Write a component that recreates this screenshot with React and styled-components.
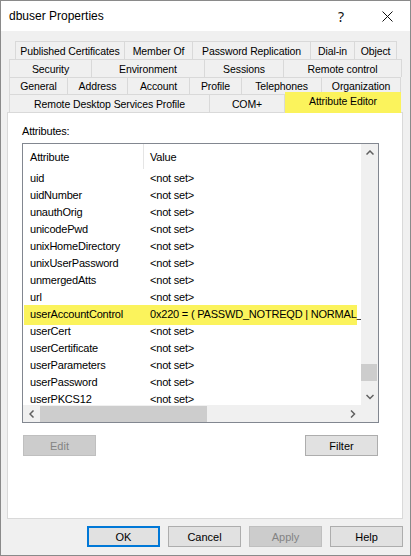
import React from 'react';
import styled, { createGlobalStyle } from 'styled-components';

const Global = createGlobalStyle`
  html, body { margin: 0; padding: 0; background: #ffffff; }
  body { font-family: "Liberation Sans", Arial, sans-serif; }
  * { box-sizing: border-box; }
`;

const Window = styled.div`
  width: 411px;
  height: 556px;
  border: 1px solid #8a8a8a;
  background: #f0f0f0;
  display: flex;
  flex-direction: column;
  font-family: "Liberation Sans", Arial, sans-serif;
  font-size: 11px;
  letter-spacing: -0.2px;
  color: #000;
  overflow: hidden;
`;

const TitleBar = styled.div`
  height: 30px;
  flex-shrink: 0;
  background: #ffffff;
  display: flex;
  align-items: center;
  padding-left: 8px;
`;

const Title = styled.div`
  flex: 1;
  font-family: "Liberation Sans", Arial, sans-serif;
  font-size: 12px;
  letter-spacing: 0;
`;

const TitleButton = styled.div`
  width: 46px;
  height: 30px;
  display: flex;
  align-items: center;
  justify-content: center;
  font-family: "Noto Sans", sans-serif;
  font-size: 14px;
  letter-spacing: 0;
  color: #111;
`;

const Body = styled.div`
  flex: 1;
  display: flex;
  flex-direction: column;
  padding: 10px 7px 0 6px;
`;

const TabRow = styled.div`
  display: flex;
  height: ${p => p.$h}px;
  padding-left: ${p => p.$indent}px;
  font-size: 10.5px;
  letter-spacing: -0.1px;
`;

const Tab = styled.div`
  width: ${p => p.$w}px;
  flex-shrink: 0;
  display: flex;
  align-items: center;
  justify-content: center;
  white-space: nowrap;
  border-top: 1px solid #d9d9d9;
  border-right: 1px solid #d9d9d9;
  &:first-child { border-left: 1px solid #d9d9d9; }
  background: #f0f0f0;
`;

const SelectedTab = styled.div`
  width: ${p => p.$w}px;
  flex-shrink: 0;
  display: flex;
  align-items: center;
  justify-content: center;
  white-space: nowrap;
  background: #fbf35c;
  margin-top: -2px;
  margin-bottom: -1px;
  padding-bottom: 3px;
  position: relative;
  z-index: 1;
`;

const Panel = styled.div`
  height: 407px;
  background: #ffffff;
  border: 1px solid #d9d9d9;
  padding: 12px 0 0 14px;
  display: flex;
  flex-direction: column;
`;

const Label = styled.div`
  height: 13px;
  line-height: 13px;
`;

const ListBox = styled.div`
  margin-top: 5px;
  width: 357px;
  height: 280px;
  border: 1px solid #828790;
  display: grid;
  grid-template-columns: 338px 17px;
  grid-template-rows: 261px 17px;
`;

const ListContent = styled.div`
  overflow: hidden;
  display: flex;
  flex-direction: column;
`;

const HeaderRow = styled.div`
  height: 25px;
  flex-shrink: 0;
  display: flex;
  align-items: stretch;
`;

const HeaderCell = styled.div`
  width: ${p => (p.$w ? `${p.$w}px` : 'auto')};
  flex: ${p => (p.$w ? '0 0 auto' : '1')};
  display: flex;
  align-items: center;
  padding-left: ${p => p.$pad}px;
  border-right: ${p => (p.$divider ? '1px solid #e5e5e5' : 'none')};
`;

const Row = styled.div`
  height: 17px;
  flex-shrink: 0;
  display: flex;
  align-items: center;
  white-space: nowrap;
  position: relative;
  ${p =>
    p.$hl &&
    `
    &::before {
      content: "";
      position: absolute;
      left: 1px;
      right: 4px;
      top: 0;
      bottom: -3px;
      background: #fbf35c;
    }
  `}
`;

const Cell = styled.div`
  position: relative;
  width: ${p => (p.$w ? `${p.$w}px` : 'auto')};
  flex: ${p => (p.$w ? '0 0 auto' : '1 1 auto')};
  min-width: 0;
  overflow: hidden;
  padding-left: ${p => p.$pad}px;
  padding-top: 1px;
`;

const VScroll = styled.div`
  background: #f0f0f0;
  display: flex;
  flex-direction: column;
`;

const ArrowBox = styled.div`
  width: 17px;
  height: 17px;
  flex-shrink: 0;
  display: flex;
  align-items: center;
  justify-content: center;
`;

const VTrack = styled.div`
  flex: 1;
  display: flex;
  flex-direction: column;
  justify-content: flex-end;
`;

const VThumb = styled.div`
  height: 17px;
  margin: 0 1px 7px 0;
  background: #cdcdcd;
`;

const HScroll = styled.div`
  background: #f0f0f0;
  display: flex;
  align-items: stretch;
`;

const HTrack = styled.div`
  flex: 1;
  display: flex;
  align-items: stretch;
`;

const HThumb = styled.div`
  width: 167px;
  margin: 1px 0 0 0;
  background: #cdcdcd;
`;

const Corner = styled.div`
  background: #f0f0f0;
`;

const ButtonRow = styled.div`
  width: 357px;
  margin-top: 12px;
  display: flex;
  justify-content: space-between;
  padding: 0 1px;
`;

const Button = styled.div`
  width: 73px;
  height: 21px;
  display: flex;
  align-items: center;
  justify-content: center;
  font-family: "Liberation Sans", Arial, sans-serif;
  font-size: 11px;
  letter-spacing: 0;
  border: ${p => (p.$default ? '2px solid #0078d7' : p.$disabled ? '1px solid #bfbfbf' : '1px solid #adadad')};
  background: ${p => (p.$disabled ? '#cccccc' : '#e1e1e1')};
  color: ${p => (p.$disabled ? '#838383' : '#000')};
`;

const Footer = styled.div`
  display: flex;
  justify-content: flex-end;
  gap: 8px;
  margin-top: 7px;
`;

const Chevron = ({ dir }) => {
  const pts = {
    up: '0.5,4.5 4,1 7.5,4.5',
    down: '0.5,1 4,4.5 7.5,1',
    left: '4.5,0.5 1,4 4.5,7.5',
    right: '1,0.5 4.5,4 1,7.5',
  }[dir];
  const vertical = dir === 'up' || dir === 'down';
  return (
    <svg width={vertical ? 8 : 6} height={vertical ? 6 : 8} viewBox={vertical ? '0 0 8 6' : '0 0 6 8'}>
      <polyline points={pts} fill="none" stroke="#606060" strokeWidth="1.5" />
    </svg>
  );
};

const tabRows = [
  { h: 18, indent: 8, tabs: [['Published Certificates', 110], ['Member Of', 68], ['Password Replication', 118], ['Dial-in', 44], ['Object', 42]] },
  { h: 18, indent: 2, tabs: [['Security', 83], ['Environment', 113], ['Sessions', 79], ['Remote control', 118]] },
  { h: 17, indent: 2, tabs: [['General', 59], ['Address', 60], ['Account', 62], ['Profile', 52], ['Telephones', 80], ['Organization', 79]] },
  { h: 18, indent: 2, tabs: [['Remote Desktop Services Profile', 201], ['COM+', 75], ['Attribute Editor', 116, true]] },
];

const NS = '<not set>';
const attrs = [
  ['uid', NS],
  ['uidNumber', NS],
  ['unauthOrig', NS],
  ['unicodePwd', NS],
  ['unixHomeDirectory', NS],
  ['unixUserPassword', NS],
  ['unmergedAtts', NS],
  ['url', NS],
  ['userAccountControl', '0x220 = ( PASSWD_NOTREQD | NORMAL_ACCOUNT )', true],
  ['userCert', NS],
  ['userCertificate', NS],
  ['userParameters', NS],
  ['userPassword', NS],
  ['userPKCS12', NS],
];

export default function App() {
  return (
    <>
      <Global />
      <Window>
        <TitleBar>
          <Title>dbuser Properties</Title>
          <TitleButton>?</TitleButton>
          <TitleButton>
            <svg width="11" height="11" viewBox="0 0 11 11">
              <path d="M0.5 0.5 L10.5 10.5 M10.5 0.5 L0.5 10.5" stroke="#111" strokeWidth="1" fill="none" />
            </svg>
          </TitleButton>
        </TitleBar>
        <Body>
          {tabRows.map((r, i) => (
            <TabRow key={i} $h={r.h} $indent={r.indent}>
              {r.tabs.map(([name, w, sel]) =>
                sel ? (
                  <SelectedTab key={name} $w={w}>{name}</SelectedTab>
                ) : (
                  <Tab key={name} $w={w}>{name}</Tab>
                )
              )}
            </TabRow>
          ))}
          <Panel>
            <Label>Attributes:</Label>
            <ListBox>
              <ListContent>
                <HeaderRow>
                  <HeaderCell $w={121} $pad={7} $divider>Attribute</HeaderCell>
                  <HeaderCell $pad={6}>Value</HeaderCell>
                </HeaderRow>
                {attrs.map(([a, v, hl]) => (
                  <Row key={a} $hl={hl}>
                    <Cell $w={121} $pad={7}>{a}</Cell>
                    <Cell $pad={6}>{v}</Cell>
                  </Row>
                ))}
              </ListContent>
              <VScroll>
                <ArrowBox><Chevron dir="up" /></ArrowBox>
                <VTrack><VThumb /></VTrack>
                <ArrowBox><Chevron dir="down" /></ArrowBox>
              </VScroll>
              <HScroll>
                <ArrowBox><Chevron dir="left" /></ArrowBox>
                <HTrack><HThumb /></HTrack>
                <ArrowBox><Chevron dir="right" /></ArrowBox>
              </HScroll>
              <Corner />
            </ListBox>
            <ButtonRow>
              <Button $disabled>Edit</Button>
              <Button>Filter</Button>
            </ButtonRow>
          </Panel>
          <Footer>
            <Button $default>OK</Button>
            <Button>Cancel</Button>
            <Button $disabled>Apply</Button>
            <Button>Help</Button>
          </Footer>
        </Body>
      </Window>
    </>
  );
}
